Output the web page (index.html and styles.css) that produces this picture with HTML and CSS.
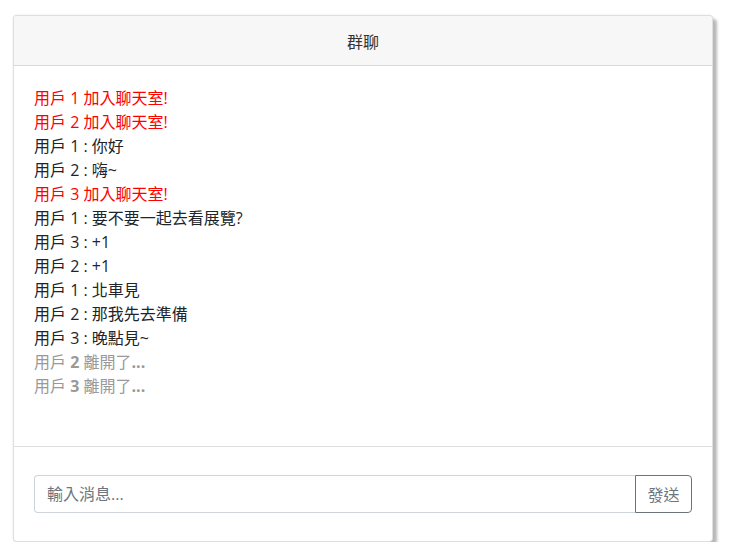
FILE: index.html
```html
<!DOCTYPE html>
<html lang="zh-Hant">
<head>
<meta charset="utf-8">
<title>群聊</title>
<link rel="stylesheet" href="styles.css">
</head>
<body>
<div class="card">
  <div class="card-header">群聊</div>
  <div class="card-body">
    <div class="msg sys">用戶 1 加入聊天室!</div>
    <div class="msg sys">用戶 2 加入聊天室!</div>
    <div class="msg">用戶 1 : 你好</div>
    <div class="msg">用戶 2 : 嗨~</div>
    <div class="msg sys">用戶 3 加入聊天室!</div>
    <div class="msg">用戶 1 : 要不要一起去看展覽?</div>
    <div class="msg">用戶 3 : +1</div>
    <div class="msg">用戶 2 : +1</div>
    <div class="msg">用戶 1 : 北車見</div>
    <div class="msg">用戶 2 : 那我先去準備</div>
    <div class="msg">用戶 3 : 晚點見~</div>
    <div class="msg left">用戶 <b>2</b> 離開了<b>...</b></div>
    <div class="msg left">用戶 <b>3</b> 離開了<b>...</b></div>
  </div>
  <div class="card-footer">
    <div class="input-group">
      <input class="form-control" type="text" placeholder="輸入消息...">
      <button class="btn">發送</button>
    </div>
  </div>
</div>
</body>
</html>
```

FILE: styles.css
```css
* { box-sizing: border-box; }
html, body { margin: 0; padding: 0; background: #fff; }
body {
  padding: 15px 0 0 13px;
  font-family: "Open Sans", "Noto Sans CJK TC", sans-serif;
  font-size: 16px;
  color: #212529;
}
.card {
  width: 700px;
  height: 527px;
  border: 1px solid rgba(0,0,0,.125);
  border-radius: 4px;
  background: #fff;
  box-shadow: 4px 4px 3px #b8b8b8, 0 0 2px rgba(0,0,0,.12);
  display: flex;
  flex-direction: column;
  overflow: hidden;
}
.card-header {
  height: 50px;
  background: #f7f7f7;
  border-bottom: 1px solid rgba(0,0,0,.125);
  display: flex;
  align-items: center;
  justify-content: center;
  font-size: 16px;
  color: #333;
}
.card-body {
  height: 381px;
  padding: 20px;
  border-bottom: 1px solid rgba(0,0,0,.125);
}
.msg { line-height: 24px; height: 24px; white-space: nowrap; }
.msg.sys { color: #ff0000; }
.msg.left { color: #999; }
.msg.left b { font-weight: bold; }
.card-footer {
  flex: 1;
  padding: 0 20px;
  display: flex;
  align-items: center;
}
.input-group { display: flex; width: 100%; height: 38px; }
.form-control {
  flex: 1;
  height: 38px;
  border: 1px solid #ced4da;
  border-right: none;
  border-radius: 4px 0 0 4px;
  padding: 6px 12px;
  font-family: inherit;
  font-size: 16px;
  color: #495057;
  outline: none;
}
.form-control::placeholder { color: #6c757d; }
.btn {
  width: 57px;
  height: 38px;
  border: 1px solid #6c757d;
  border-radius: 0 4px 4px 0;
  background: #fff;
  color: #6c757d;
  font-family: inherit;
  font-size: 16px;
  padding: 0;
}
```
